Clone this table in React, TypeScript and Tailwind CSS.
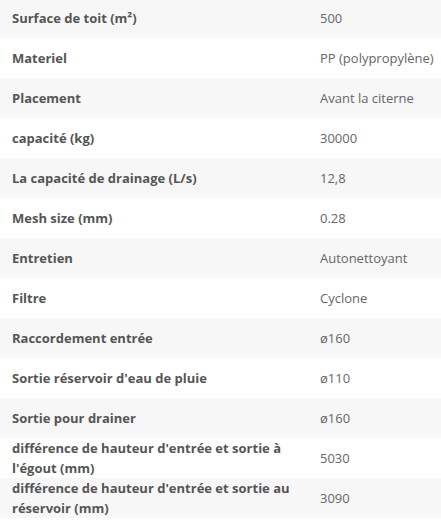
const rows: [string, string][] = [
  ['Surface de toit (m²)', '500'],
  ['Materiel', 'PP (polypropylène)'],
  ['Placement', 'Avant la citerne'],
  ['capacité (kg)', '30000'],
  ['La capacité de drainage (L/s)', '12,8'],
  ['Mesh size (mm)', '0.28'],
  ['Entretien', 'Autonettoyant'],
  ['Filtre', 'Cyclone'],
  ['Raccordement entrée', 'ø160'],
  ["Sortie réservoir d'eau de pluie", 'ø110'],
  ['Sortie pour drainer', 'ø160'],
  ["différence de hauteur d'entrée et sortie à l'égout (mm)", '5030'],
  ["différence de hauteur d'entrée et sortie au réservoir (mm)", '3090'],
];

export default function App() {
  return (
    <div className="w-[441px] h-[530px] overflow-hidden bg-white font-['Open_Sans',sans-serif] text-[13px]">
      <div className="-mt-[2px]">
        {rows.map(([label, value], i) => (
          <div
            key={label}
            className={`flex items-center h-[40px] ${i % 2 === 0 ? 'bg-[#f7f7f7]' : 'bg-white'}`}
          >
            <div className="w-[320px] pl-[12px] pr-[10px] font-bold text-[#555] leading-[20px]">
              {label}
            </div>
            <div className="flex-1 text-[#666] leading-[20px]">{value}</div>
          </div>
        ))}
      </div>
    </div>
  );
}
